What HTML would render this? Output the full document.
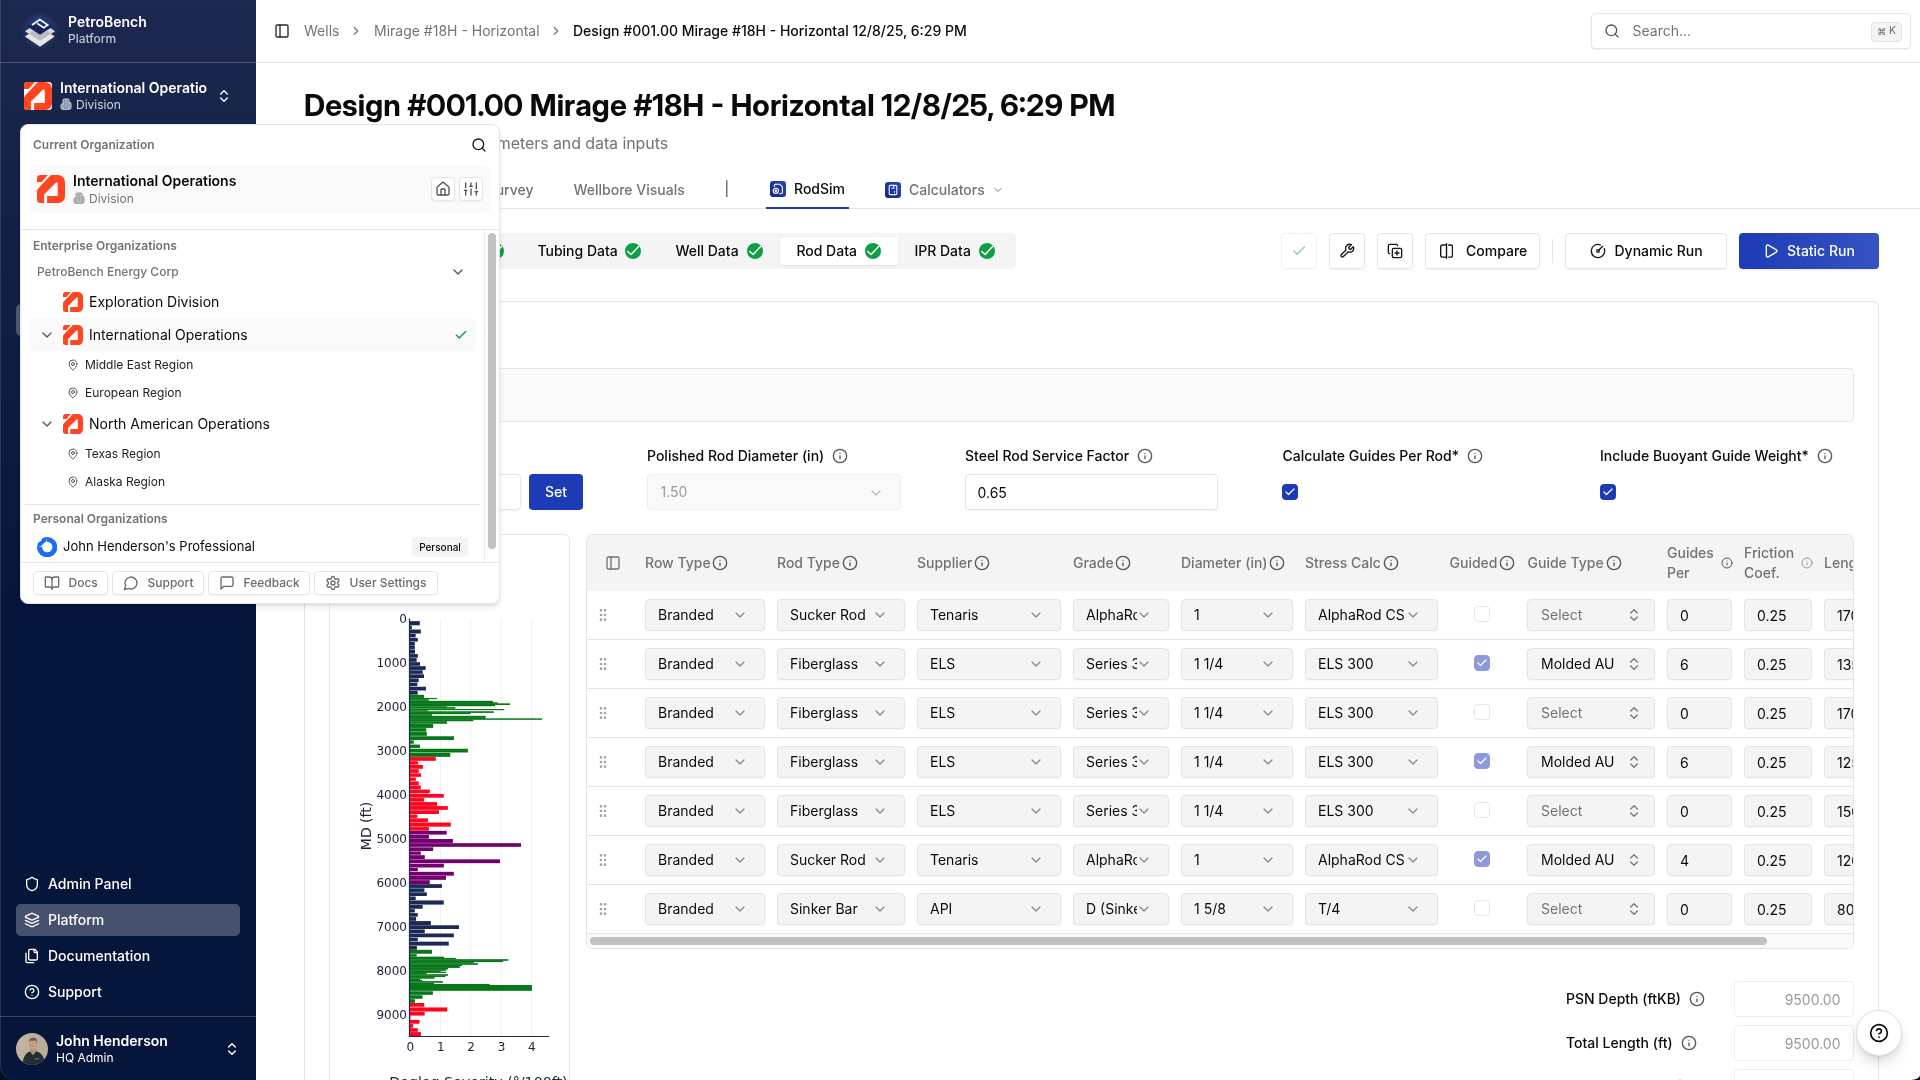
<!DOCTYPE html>
<html lang="en">
<head>
<meta charset="utf-8">
<title>PetroBench Platform - RodSim Design</title>
<style>
*{box-sizing:border-box;margin:0;padding:0}
html,body{width:1920px;height:1080px;overflow:hidden;background:#0a0f1f}
body{font-size-adjust:0.5459;font-feature-settings:'liga' 1,'calt' 1;font-family:"Inter","Liberation Sans",sans-serif;font-size:14px;line-height:20px;color:#0a0a0a;-webkit-font-smoothing:antialiased}
svg{display:block}
.ic{fill:none;stroke:currentColor;stroke-width:2;stroke-linecap:round;stroke-linejoin:round}
.abs{position:absolute}
.nw{white-space:nowrap}
#app{position:absolute;left:0;top:0;width:1920px;height:1080px;overflow:hidden;background:#0a0f1f;will-change:transform}
#sidebar{position:absolute;left:0;top:0;width:256px;height:1080px;background:linear-gradient(180deg,#1c284e 0%,#06153a 58%,#06153a 100%);box-shadow:inset 1px 0 0 rgba(255,255,255,.13);border-bottom-left-radius:14px 15px;color:#fff;overflow:hidden}
#main{position:absolute;left:256px;top:0;width:1664px;height:1080px;background:#fff;border-bottom-right-radius:9px 5px;overflow:hidden}
.m{font-weight:500}.sb,.lbl12.sb{font-weight:600}.b{font-weight:700}
.mut{color:#737373}
/* sidebar */
.sbline{position:absolute;left:0;width:256px;height:1px;background:rgba(255,255,255,.22)}
.nav{position:absolute;left:16px;width:224px;height:32px;border-radius:5px}
.nav svg{position:absolute;left:8px;top:8px;width:16px;height:16px}
.nav span{position:absolute;left:32px;top:6px;font-weight:500;font-size:14px;line-height:20px;white-space:nowrap}
.nav.act{background:rgba(255,255,255,.26)}
/* popover */
#pop{position:absolute;left:20px;top:124px;width:480px;height:480px;background:#fff;border:1px solid #e5e5e5;border-radius:8px;box-shadow:0 4px 6px -1px rgba(0,0,0,.10),0 2px 4px -2px rgba(0,0,0,.10);color:#0a0a0a;overflow:hidden}
.lbl12{position:absolute;font-size:12px;line-height:16px;font-weight:500;color:#737373;white-space:nowrap}
.orgrow{position:absolute;left:8px;width:447px;height:32px;border-radius:1px}
.orgrow .lg{position:absolute;left:34px;top:6px;width:20px;height:20px}
.orgrow .nm{position:absolute;left:60px;top:6px;font-size:14px;line-height:20px;white-space:nowrap;color:#0a0a0a}
.orgrow .chev{position:absolute;left:10px;top:8px;width:16px;height:16px;color:#555}
.reg{position:absolute;left:46px;height:28px;width:380px}
.reg svg{position:absolute;left:0;top:8px;width:12px;height:12px;color:#555}
.reg span{position:absolute;left:18px;top:6px;font-size:12px;line-height:16px;font-weight:400;white-space:nowrap;color:#222}
.fbtn{position:absolute;top:446px;height:24px;border:1px solid #e5e5e5;border-radius:4px;background:#fff;color:#6b6b6b;font-size:12px;line-height:16px;font-weight:500;box-shadow:0 1px 2px rgba(0,0,0,.04)}
.fbtn svg{position:absolute;left:10px;top:3px;width:16px;height:16px}
.fbtn span{position:absolute;left:34.500px;top:2.500px;white-space:nowrap}
/* main */
.hline{position:absolute;left:0;height:1px;background:#e5e5e5}
.btn{position:absolute;top:233px;height:36px;border:1px solid #e5e5e5;border-radius:4px;background:#fff;box-shadow:0 1px 2px rgba(0,0,0,.05)}
.btn svg{position:absolute;width:16px;height:16px;top:9px}
.btn span{position:absolute;top:7px;font-weight:500;white-space:nowrap}
.pill{position:absolute;top:4px;height:28px;border-radius:4px;font-weight:500;white-space:nowrap}
.pill span{position:absolute;left:16.400px;top:4px}
.pill i{position:absolute;right:17px;top:6px;width:16px;height:16px;border-radius:50%;background:#0e9f44;box-shadow:0 0 0 .600px rgba(255,255,255,.8)}
.pill i svg{position:absolute;left:0;top:0;width:16px;height:16px;overflow:visible}
.flabel{position:absolute;top:446px;font-weight:500;white-space:nowrap;line-height:20px}
.info{position:absolute;width:16px;height:16px;color:#555}
.cb{position:absolute;width:16px;height:16px;border-radius:4px;background:#1d3bb6}
.cb svg{position:absolute;left:2px;top:2px;width:12px;height:12px;color:#fff;stroke-width:2.4}
/* table */
#tbl{position:absolute;left:330px;top:534px;width:1268px;height:415px;border:1px solid #e5e5e5;border-radius:6px;overflow:hidden;background:#fff}
.th{position:absolute;top:0;height:56px;color:#737373;font-weight:500;white-space:nowrap}
.th span{position:absolute;left:0;top:18px}
.th .info{top:20px;color:#555}
.row{position:absolute;left:0;width:1400px;height:49px;border-bottom:1px solid #e5e5e5}
.sel,.inp{position:absolute;top:8px;height:32px;border:1px solid #e4e4e7;border-radius:4px;background:#f4f4f5;box-shadow:0 1px 2px rgba(0,0,0,.04);overflow:hidden}
.sel span{position:absolute;left:12px;top:5px;white-space:nowrap;overflow:hidden}
.sel svg{position:absolute;top:7px;right:16px;width:16px;height:16px;color:#8a8a8a}
.sel.ud svg{right:12px;color:#777}.sel.ud span{left:13px}
.inp span{position:absolute;left:12px;top:6px;white-space:nowrap}
.grip{position:absolute;left:8px;top:16px;width:16px;height:16px;color:#a3a3a3}
.tcb{position:absolute;left:887px;top:15px;width:16px;height:16px;border-radius:4px;border:1px solid #e3e5ef;background:#fff}
.tcb.on{background:#8d99dc;border-color:#8d99dc}
.tcb.on svg{position:absolute;left:1px;top:1px;width:12px;height:12px;color:#fff;stroke-width:2.4}
</style>
</head>
<body>
<div id="app">
<svg width="0" height="0" style="position:absolute;left:-10px;top:-10px" aria-hidden="true">
  <defs>
    <linearGradient id="bluegrad" x1="1" y1="0" x2="0" y2="1"><stop offset="0" stop-color="#2747c8"/><stop offset="1" stop-color="#142678"/></linearGradient>
    <g id="orglogo">
      <rect width="28" height="28" rx="3.500" fill="#fff"/>
      <path d="M3.500 0H10.750L4.800 6.900H0V3.500A3.500 3.500 0 0 1 3.500 0z" fill="#ff4521"/>
      <path d="M13.900 0H21A7 7 0 0 1 28 7V21.500A6.500 6.500 0 0 1 21.500 28H10.100V21H20.750V8.700A1.500 1.500 0 0 0 19.250 7.200L7 19.500V28H3.500A3.500 3.500 0 0 1 0 24.500V16.200A4 4 0 0 1 1.150 13.400z" fill="#ff4521"/>
    </g>
    <g id="orglogo-t">
      <path d="M3.500 0H10.750L4.800 6.900H0V3.500A3.500 3.500 0 0 1 3.500 0z" fill="#ff4521"/>
      <path d="M13.900 0H21A7 7 0 0 1 28 7V21.500A6.500 6.500 0 0 1 21.500 28H10.100V21H20.750V8.700A1.500 1.500 0 0 0 19.250 7.200L7 19.500V28H3.500A3.500 3.500 0 0 1 0 24.500V16.200A4 4 0 0 1 1.150 13.400z" fill="#ff4521"/>
    </g>
    <g id="i-building"><path d="M6 22V4a2 2 0 0 1 2-2h8a2 2 0 0 1 2 2v18Z"/><path d="M6 12H4a2 2 0 0 0-2 2v6a2 2 0 0 0 2 2h2"/><path d="M18 9h2a2 2 0 0 1 2 2v9a2 2 0 0 1-2 2h-2"/><path d="M10 6h4"/><path d="M10 10h4"/><path d="M10 14h4"/><path d="M10 18h4"/></g>
    <g id="i-house"><path d="M15 21v-8a1 1 0 0 0-1-1h-4a1 1 0 0 0-1 1v8"/><path d="M3 10a2 2 0 0 1 .709-1.528l7-5.999a2 2 0 0 1 2.582 0l7 5.999A2 2 0 0 1 21 10v9a2 2 0 0 1-2 2H5a2 2 0 0 1-2-2z"/></g>
    <g id="i-files"><path d="M20 7h-3a2 2 0 0 1-2-2V2"/><path d="M9 18a2 2 0 0 1-2-2V4a2 2 0 0 1 2-2h7l4 4v10a2 2 0 0 1-2 2Z"/><path d="M3 7.600v12.800A1.600 1.600 0 0 0 4.600 22h9.800"/></g>
    <g id="i-pin"><path d="M20 10c0 4.993-5.539 10.193-7.399 11.799a1 1 0 0 1-1.202 0C9.539 20.193 4 14.993 4 10a8 8 0 0 1 16 0"/><circle cx="12" cy="10" r="3"/></g>
    <g id="i-layers"><path d="m12.830 2.180a2 2 0 0 0-1.660 0L2.600 6.080a1 1 0 0 0 0 1.830l8.580 3.910a2 2 0 0 0 1.660 0l8.580-3.900a1 1 0 0 0 0-1.830Z"/><path d="m22 17.650-9.170 4.160a2 2 0 0 1-1.660 0L2 17.650"/><path d="m22 12.650-9.170 4.160a2 2 0 0 1-1.660 0L2 12.650"/></g>
    <g id="i-gauge"><path d="M15.600 2.700a10 10 0 1 0 5.700 5.700"/><circle cx="12" cy="12" r="2"/><path d="M13.400 10.600 19 5"/></g>
    <g id="i-wrench"><path d="M14.700 6.300a1 1 0 0 0 0 1.400l1.600 1.600a1 1 0 0 0 1.400 0l3.770-3.770a6 6 0 0 1-7.940 7.940l-6.910 6.910a2.120 2.120 0 0 1-3-3l6.910-6.910a6 6 0 0 1 7.940-7.940l-3.760 3.760z"/></g>
    <g id="i-book"><path d="M12 7v14"/><path d="M3 18a1 1 0 0 1-1-1V4a1 1 0 0 1 1-1h5a4 4 0 0 1 4 4 4 4 0 0 1 4-4h5a1 1 0 0 1 1 1v13a1 1 0 0 1-1 1h-6a3 3 0 0 0-3 3 3 3 0 0 0-3-3z"/></g>
    <g id="i-help"><circle cx="12" cy="12" r="10"/><path d="M9.090 9a3 3 0 0 1 5.830 1c0 2-3 3-3 3"/><path d="M12 17h.01"/></g>
    <g id="i-info"><circle cx="12" cy="12" r="10"/><path d="M12 16v-4"/><path d="M12 8h.01"/></g>
    <g id="i-cd"><path d="m6 9 6 6 6-6"/></g>
    <g id="i-cr"><path d="m9 18 6-6-6-6"/></g>
    <g id="i-ud"><path d="m7 15 5 5 5-5"/><path d="m7 9 5-5 5 5"/></g>
    <g id="i-check"><path d="M20 6 9 17l-5-5"/></g>
    <g id="i-search"><circle cx="11" cy="11" r="8"/><path d="m21 21-4.300-4.300"/></g>
    <g id="i-panel"><rect width="18" height="18" x="3" y="3" rx="2"/><path d="M9 3v18"/></g>
    <g id="i-grip"><circle cx="9" cy="12" r="1"/><circle cx="9" cy="5" r="1"/><circle cx="9" cy="19" r="1"/><circle cx="15" cy="12" r="1"/><circle cx="15" cy="5" r="1"/><circle cx="15" cy="19" r="1"/></g>
    <g id="i-sliders"><path d="M4 21v-7"/><path d="M4 10V3"/><path d="M12 21v-9"/><path d="M12 8V3"/><path d="M20 21v-5"/><path d="M20 12V3"/><path d="M2 14h4"/><path d="M10 8h4"/><path d="M18 16h4"/></g>
    <g id="i-msgc"><path d="M7.900 20A9 9 0 1 0 4 16.100L2 22Z"/></g>
    <g id="i-msgs"><path d="M21 15a2 2 0 0 1-2 2H7l-4 4V5a2 2 0 0 1 2-2h14a2 2 0 0 1 2 2z"/></g>
    <g id="i-gear"><path d="M12.220 2h-.440a2 2 0 0 0-2 2v.180a2 2 0 0 1-1 1.730l-.430.250a2 2 0 0 1-2 0l-.150-.080a2 2 0 0 0-2.730.730l-.220.380a2 2 0 0 0 .730 2.730l.150.100a2 2 0 0 1 1 1.720v.510a2 2 0 0 1-1 1.740l-.150.090a2 2 0 0 0-.730 2.730l.220.380a2 2 0 0 0 2.730.730l.150-.080a2 2 0 0 1 2 0l.430.250a2 2 0 0 1 1 1.730V20a2 2 0 0 0 2 2h.440a2 2 0 0 0 2-2v-.180a2 2 0 0 1 1-1.730l.430-.250a2 2 0 0 1 2 0l.150.080a2 2 0 0 0 2.730-.730l.220-.390a2 2 0 0 0-.730-2.730l-.150-.080a2 2 0 0 1-1-1.740v-.500a2 2 0 0 1 1-1.740l.150-.090a2 2 0 0 0 .730-2.730l-.220-.380a2 2 0 0 0-2.730-.730l-.150.080a2 2 0 0 1-2 0l-.430-.250a2 2 0 0 1-1-1.730V4a2 2 0 0 0-2-2z"/><circle cx="12" cy="12" r="3"/></g>
    <g id="i-copyplus"><path d="M15 12v6"/><path d="M12 15h6"/><rect width="14" height="14" x="8" y="8" rx="2" ry="2"/><path d="M4 16c-1.100 0-2-.900-2-2V4c0-1.100.900-2 2-2h10c1.100 0 2 .900 2 2"/></g>
    <g id="i-split"><path d="M8 19H5c-1.100 0-2-.900-2-2V7c0-1.100.900-2 2-2h3"/><path d="M16 5h3c1.100 0 2 .900 2 2v10c0 1.100-.900 2-2 2h-3"/><path d="M12 4v16"/></g>
    <g id="i-play"><path d="M5 5a2 2 0 0 1 3.008-1.728l11.997 6.998a2 2 0 0 1 .003 3.458l-12 7A2 2 0 0 1 5 19z"/></g>
  </defs>
</svg>
<div id="sidebar">
  <svg class="abs" style="left:24px;top:15px;width:32px;height:32px;overflow:visible" viewBox="0 0 32 32">
    <defs><radialGradient id="glow" cx="50%" cy="50%" r="50%"><stop offset="0%" stop-color="#9aa8cc" stop-opacity=".50"/><stop offset="60%" stop-color="#8fa0c8" stop-opacity=".16"/><stop offset="100%" stop-color="#8fa0c8" stop-opacity="0"/></radialGradient>
    <linearGradient id="ltop" x1="0" y1="0" x2="0" y2="1"><stop offset="0" stop-color="#1d3f86"/><stop offset=".45" stop-color="#1b3474"/><stop offset=".62" stop-color="#19235b"/><stop offset="1" stop-color="#171f55"/></linearGradient></defs>
    <circle cx="16" cy="16" r="19" fill="url(#glow)"/>
    <path d="M0.900 21.500 16 11.500 30.600 21.500 16 31.800z" fill="#e6e7e8"/>
    <path d="M1.200 16.200 16 6.500 30.800 16.200 16 25.700z" fill="#bcbdc1"/>
    <path d="M1.200 16.200 5.600 13.300 9.200 15.700 4.600 18.500z" fill="#dadbdd"/><path d="M30.800 16.200 26.500 13.300 22.900 15.700 27.500 18.500z" fill="#dadbdd"/>
    <path d="M1.250 10 15.650 0 31 10 16 19.700z" fill="url(#ltop)"/>
    <path d="M8 10 15.850 4.550 23.800 10 19.700 12.700 13.300 8.400" fill="none" stroke="#fff" stroke-width="1.550" stroke-linejoin="miter"/>
  </svg>
  <div class="abs sb nw" style="left:68px;top:12px;font-size:14px;line-height:20px">PetroBench</div>
  <div class="abs m nw" style="left:68px;top:31px;font-size:12px;line-height:16px;color:#bfc5d8">Platform</div>
  <div class="sbline" style="top:62px"></div>

  <svg class="abs" style="left:24px;top:82px;width:28px;height:28px" viewBox="0 0 28 28"><use href="#orglogo"/></svg>
  <div class="abs sb nw" style="left:60px;top:78px;width:147px;overflow:hidden;font-size:14px;line-height:20px">International Operations</div>
  <svg class="abs ic" style="left:60px;top:98px;width:12px;height:12px;color:#cfd4e2;fill:rgba(160,170,198,.7)" viewBox="0 0 24 24"><use href="#i-building"/></svg>
  <div class="abs nw" style="left:76px;top:97px;font-size:12px;line-height:16px;color:#d3d8e6">Division</div>
  <svg class="abs ic" style="left:216px;top:88px;width:16px;height:16px" viewBox="0 0 24 24"><path d="m7 15 5 5 5-5"/><path d="m7 9 5-5 5 5"/></svg>

  <!-- nav items (mostly hidden behind the organization switcher) -->
  <div class="abs m nw" style="left:24px;top:140px;font-size:12px;line-height:16px;color:#aab2cc">Workspace</div>
  <div class="nav" style="top:165px"><svg class="ic" viewBox="0 0 24 24"><use href="#i-house"/></svg><span>Dashboard</span></div>
  <div class="nav" style="top:200px"><svg class="ic" viewBox="0 0 24 24"><use href="#i-files"/></svg><span>Projects</span></div>
  <div class="nav" style="top:235px"><svg class="ic" viewBox="0 0 24 24"><use href="#i-pin"/></svg><span>Fields</span></div>
  <div class="nav" style="top:270px"><svg class="ic" viewBox="0 0 24 24"><use href="#i-layers"/></svg><span>Pads</span></div>
  <div class="nav act" style="top:304px"><svg class="ic" viewBox="0 0 24 24"><use href="#i-gauge"/></svg><span>Wells</span></div>
  <div class="nav" style="top:340px"><svg class="ic" viewBox="0 0 24 24"><use href="#i-wrench"/></svg><span>Designs</span></div>
  <div class="nav" style="top:375px"><svg class="ic" viewBox="0 0 24 24"><use href="#i-book"/></svg><span>Reports</span></div>

  <div class="nav" style="top:868px"><svg class="ic" viewBox="0 0 24 24"><path d="M20 13c0 5-3.500 7.500-7.660 8.950a1 1 0 0 1-.670-.010C7.500 20.500 4 18 4 13V6a1 1 0 0 1 1-1c2 0 4.500-1.200 6.240-2.720a1.170 1.170 0 0 1 1.520 0C14.510 3.810 17 5 19 5a1 1 0 0 1 1 1z"/></svg><span>Admin Panel</span></div>
  <div class="nav act" style="top:904px"><svg class="ic" viewBox="0 0 24 24"><use href="#i-layers"/></svg><span>Platform</span></div>
  <div class="nav" style="top:940px"><svg class="ic" viewBox="0 0 24 24"><use href="#i-files"/></svg><span>Documentation</span></div>
  <div class="nav" style="top:976px"><svg class="ic" viewBox="0 0 24 24"><use href="#i-help"/></svg><span>Support</span></div>
  <div class="sbline" style="top:1016px"></div>

  <!-- avatar -->
  <svg class="abs" style="left:16px;top:1033px;width:32px;height:32px" viewBox="0 0 32 32">
    <defs><clipPath id="avc"><circle cx="16" cy="16" r="16"/></clipPath></defs>
    <g clip-path="url(#avc)">
      <rect width="32" height="32" fill="#b9ad97"/>
      <ellipse cx="9" cy="14" rx="9" ry="12" fill="#c2b7a2" opacity=".6"/>
      <path d="M6.500 32c.300-8 3.700-12.500 7.500-13.500l3 2.200 3.200-2.400c5 1.300 8.300 5.700 9.300 13.700z" fill="#252d33"/>
      <path d="M14 18.200l3 3 3.200-3.200-.3-2.500h-5.600z" fill="#b98a72"/>
      <path d="M15.300 19.600l1.700 1.600 1.800-1.700" fill="none" stroke="#8f9aa3" stroke-width="1.200"/>
      <ellipse cx="17" cy="11.700" rx="4.100" ry="5.200" fill="#c99b84"/>
      <path d="M12.800 10.600c-.3-4.200 2-5.800 4.400-5.800 2.600 0 4.600 1.700 4.100 5.600-.6-1.800-1.300-2.900-2.300-3.200-1.600.7-4 .6-5.100.2-.6.700-.9 1.800-1.100 3.200z" fill="#6b5a4c"/>
      <rect x="18.600" y="25.400" width="4.600" height=".9" fill="#7d868c"/>
    </g>
  </svg>
  <div class="abs sb nw" style="left:56px;top:1031px;font-size:14px;line-height:20px">John Henderson</div>
  <div class="abs nw" style="left:56px;top:1050px;font-size:12px;line-height:16px">HQ Admin</div>
  <svg class="abs ic" style="left:224px;top:1041px;width:16px;height:16px" viewBox="0 0 24 24"><path d="m7 15 5 5 5-5"/><path d="m7 9 5-5 5 5"/></svg>
</div>
<div id="main">
<svg class="abs ic" style="left:18px;top:23px;width:16px;height:16px;color:#262626" viewBox="0 0 24 24"><use href="#i-panel"/></svg>
<div class="abs nw mut" style="left:48px;top:21px">Wells</div>
<svg class="abs ic" style="left:92.5px;top:24px;width:14px;height:14px;color:#737373" viewBox="0 0 24 24"><use href="#i-cr"/></svg>
<div class="abs nw mut" style="left:118px;top:21px">Mirage #18H - Horizontal</div>
<svg class="abs ic" style="left:293px;top:24px;width:14px;height:14px;color:#737373" viewBox="0 0 24 24"><use href="#i-cr"/></svg>
<div class="abs nw m" style="left:317px;top:21px">Design #001.00 Mirage #18H - Horizontal 12/8/25, 6:29 PM</div>
<div class="abs" style="left:1335px;top:13px;width:320px;height:36px;border:1px solid #e5e5e5;border-radius:4px;box-shadow:0 1px 2px rgba(0,0,0,.05);background:#fff">
<svg class="abs ic" style="left:12px;top:9px;width:16px;height:16px;color:#555" viewBox="0 0 24 24"><use href="#i-search"/></svg>
<div class="abs nw mut" style="left:40.500px;top:7px">Search...</div>
<div class="abs nw" style="left:279px;top:8px;width:31px;height:20px;border:1px solid #e5e5e5;border-radius:4px;background:#f4f4f5;color:#6b6b6b"><span class="abs" style="left:5.200px;top:.700px;font-size:9px;line-height:16px">⌘</span><span class="abs" style="left:17px;top:-0.500px;font-size:10.500px;line-height:16px">K</span></div>
</div>
<div class="hline" style="top:62px;width:1664px"></div>
<div class="abs nw b" style="left:48px;top:87px;font-family:'Inter Display','Inter','Liberation Sans',sans-serif;font-size-adjust:none;font-size:30px;line-height:36px;letter-spacing:calc(17.243px - 0.0846ch - 1.0013ex)">Design #001.00 Mirage #18H - Horizontal 12/8/25, 6:29 PM</div>
<div class="abs nw mut" style="right:1252px;top:131px;font-size:16px;line-height:24px;letter-spacing:-0.090px">Configure rod design parameters and data inputs</div>
<div class="abs nw m mut" style="right:1386.5px;top:180px">Deviation Survey</div>
<div class="abs nw m mut" style="left:317.5px;top:180px">Wellbore Visuals</div>
<div class="abs nw" style="left:468.6px;top:179px;color:#404040;font-size:14px;line-height:20px">|</div>
<svg class="abs" style="left:514px;top:181px;width:16px;height:16px" viewBox="0 0 16 16"><rect width="16" height="16" rx="3" fill="url(#bluegrad)"/><g fill="none" stroke="#fff" stroke-width="1.100" stroke-linecap="round" stroke-linejoin="round"><path d="M5.500 3.200h4.300l2.600 2.600v5.400a1.500 1.500 0 0 1-1.500 1.500h-1.200"/><circle cx="5.800" cy="9.800" r="2.600"/><circle cx="5.800" cy="9.800" r=".700"/><path d="M4.300 5.600V4.400a1.200 1.200 0 0 1 1.200-1.200"/></g></svg>
<div class="abs nw m" style="left:538px;top:179px">RodSim</div>
<div class="abs" style="left:510px;top:207px;width:83px;height:2px;background:#1e3bb3;z-index:2"></div>
<svg class="abs" style="left:629px;top:182px;width:16px;height:16px" viewBox="0 0 16 16"><rect width="16" height="16" rx="3" fill="url(#bluegrad)"/><g fill="none" stroke="#fff" stroke-width="1.100" stroke-linecap="round" stroke-linejoin="round"><rect x="4.200" y="3.400" width="7.600" height="9.200" rx="1.200"/><path d="M8.800 3.600v2.600h-1.800"/><path d="M9.500 9.500h.010M9.500 10.800h.010"/></g></svg>
<div class="abs nw m mut" style="left:653px;top:180px">Calculators</div>
<svg class="abs ic" style="left:736.2px;top:184px;width:12px;height:12px;color:#737373" viewBox="0 0 24 24"><use href="#i-cd"/></svg>
<div class="hline" style="top:208px;width:1664px"></div>
<div class="abs" style="left:48px;top:233px;width:712px;height:36px;border-radius:6px;background:#f4f4f5">
<div class="pill" style="left:4px;width:116px;"><span>Surface Data</span><i><svg viewBox="0 0 16 16"><path d="M2.700 8.500 6.050 11.550 13.800 3.200" fill="none" stroke="#fff" stroke-width="1.500" stroke-linecap="round" stroke-linejoin="round"/></svg></i></div>
<div class="pill" style="left:100px;width:117px;"><span>Pump Data</span><i><svg viewBox="0 0 16 16"><path d="M2.700 8.500 6.050 11.550 13.800 3.200" fill="none" stroke="#fff" stroke-width="1.500" stroke-linecap="round" stroke-linejoin="round"/></svg></i></div>
<div class="pill" style="left:217px;width:137px;"><span>Tubing Data</span><i><svg viewBox="0 0 16 16"><path d="M2.700 8.500 6.050 11.550 13.800 3.200" fill="none" stroke="#fff" stroke-width="1.500" stroke-linecap="round" stroke-linejoin="round"/></svg></i></div>
<div class="pill" style="left:355px;width:121px;"><span>Well Data</span><i><svg viewBox="0 0 16 16"><path d="M2.700 8.500 6.050 11.550 13.800 3.200" fill="none" stroke="#fff" stroke-width="1.500" stroke-linecap="round" stroke-linejoin="round"/></svg></i></div>
<div class="pill" style="left:476px;width:118px;background:#fff;box-shadow:0 1px 2px rgba(0,0,0,.08);"><span>Rod Data</span><i><svg viewBox="0 0 16 16"><path d="M2.700 8.500 6.050 11.550 13.800 3.200" fill="none" stroke="#fff" stroke-width="1.500" stroke-linecap="round" stroke-linejoin="round"/></svg></i></div>
<div class="pill" style="left:594px;width:114px;"><span>IPR Data</span><i><svg viewBox="0 0 16 16"><path d="M2.700 8.500 6.050 11.550 13.800 3.200" fill="none" stroke="#fff" stroke-width="1.500" stroke-linecap="round" stroke-linejoin="round"/></svg></i></div>
</div>
<div class="btn" style="left:1025px;width:36px;opacity:.5"><svg class="abs ic" style="left:9px;color:#0ea371" viewBox="0 0 24 24"><use href="#i-check"/></svg></div>
<div class="btn" style="left:1073px;width:36px"><svg class="abs ic" style="left:9px;color:#171717" viewBox="0 0 24 24"><use href="#i-wrench"/></svg></div>
<div class="btn" style="left:1121px;width:36px"><svg class="abs ic" style="left:9px;color:#171717" viewBox="0 0 24 24"><use href="#i-copyplus"/></svg></div>
<div class="btn" style="left:1169px;width:115px"><svg class="abs" style="left:13.800px;top:9px;width:13.200px;height:16px;fill:none;stroke:#171717;stroke-width:1.400;stroke-linecap:round;stroke-linejoin:round" viewBox="0 0 13.200 16"><path d="M6.500 .700V15.300"/><path d="M6.500 2H2.200A1.500 1.500 0 0 0 .700 3.500V12.600A1.500 1.500 0 0 0 2.200 14.100H6.500"/><path d="M8.700 2H11A1.500 1.500 0 0 1 12.500 3.500V12.600A1.500 1.500 0 0 1 11 14.100H8.700"/></svg><span style="left:40px">Compare</span></div>
<div class="abs" style="left:1296px;top:239px;width:1px;height:24px;background:#e5e5e5"></div>
<div class="btn" style="left:1309px;width:162px"><svg class="abs ic" style="left:23.500px;color:#171717" viewBox="0 0 24 24"><use href="#i-gauge"/></svg><span style="left:48.500px">Dynamic Run</span></div>
<div class="btn" style="left:1483px;width:140px;border:0;background:linear-gradient(90deg,#1d3bb6,#3653c2);color:#fff;box-shadow:0 1px 2px rgba(0,0,0,.1)"><svg class="abs ic" style="left:24px;top:10px" viewBox="0 0 24 24"><use href="#i-play"/></svg><span style="left:48px;top:8px">Static Run</span></div>
<div class="abs" style="left:48px;top:301px;width:1575px;height:900px;border:1px solid #e5e5e5;border-radius:6px;background:#fff"></div>
<div class="abs m" style="left:73px;top:326px;font-size:18px;line-height:28px">Rod String Design</div>
<div class="abs" style="left:73px;top:368px;width:1525px;height:54px;border:1px solid #e5e5e5;border-radius:4px;background:#fafafa"></div>
<div class="abs nw mut" style="left:89px;top:385px">Taper percentages</div>
<div class="flabel" style="left:73px">Top of Rod String (ft)</div>
<div class="abs" style="left:73px;top:474px;width:192px;height:36px;border:1px solid #e5e5e5;border-radius:4px;box-shadow:0 1px 2px rgba(0,0,0,.05)"><div class="abs" style="left:12px;top:7px">0.00</div></div>
<div class="abs m" style="left:273px;top:474px;width:54px;height:36px;border-radius:4px;background:#1d3bb6;color:#fff;text-align:center;line-height:36px">Set</div>
<div class="flabel" style="left:391px">Polished Rod Diameter (in)</div>
<svg class="abs ic" style="left:576px;top:448px;width:16px;height:16px;color:#555" viewBox="0 0 24 24"><use href="#i-info"/></svg>
<div class="abs" style="left:391px;top:474px;width:254px;height:36px;border:1px solid #ededed;border-radius:4px;background:#f9f9f9"><div class="abs" style="left:12.500px;top:7px;color:#9a9a9a">1.50</div><svg class="abs ic" style="right:16px;top:10px;width:16px;height:16px;color:#bdbdbd" viewBox="0 0 24 24"><use href="#i-cd"/></svg></div>
<div class="flabel" style="left:709px">Steel Rod Service Factor</div>
<svg class="abs ic" style="left:881px;top:448px;width:16px;height:16px;color:#555" viewBox="0 0 24 24"><use href="#i-info"/></svg>
<div class="abs" style="left:709px;top:474px;width:253px;height:36px;border:1px solid #e5e5e5;border-radius:4px;box-shadow:0 1px 2px rgba(0,0,0,.05)"><div class="abs" style="left:11.500px;top:8px">0.65</div></div>
<div class="flabel" style="left:1026.5px">Calculate Guides Per Rod*</div>
<svg class="abs ic" style="left:1211px;top:448px;width:16px;height:16px;color:#555" viewBox="0 0 24 24"><use href="#i-info"/></svg>
<div class="cb" style="left:1026px;top:484px"><svg class="ic" viewBox="0 0 24 24"><use href="#i-check"/></svg></div>
<div class="flabel" style="left:1344px">Include Buoyant Guide Weight*</div>
<svg class="abs ic" style="left:1561px;top:448px;width:16px;height:16px;color:#555" viewBox="0 0 24 24"><use href="#i-info"/></svg>
<div class="cb" style="left:1344px;top:484px"><svg class="ic" viewBox="0 0 24 24"><use href="#i-check"/></svg></div>
<div class="abs" style="left:73px;top:534px;width:241px;height:700px;border:1px solid #e5e5e5;border-radius:6px;background:#fff"></div>
<svg class="abs" style="left:74px;top:535px;width:239px;height:545px;font-size-adjust:none;font-family:'DejaVu Sans','Liberation Sans',sans-serif" viewBox="330 535 239 545">
<line x1="440.5" y1="619" x2="440.5" y2="1036" stroke="#eeeff2" stroke-width="1"/>
<line x1="470.9" y1="619" x2="470.9" y2="1036" stroke="#eeeff2" stroke-width="1"/>
<line x1="501.3" y1="619" x2="501.3" y2="1036" stroke="#eeeff2" stroke-width="1"/>
<line x1="531.7" y1="619" x2="531.7" y2="1036" stroke="#eeeff2" stroke-width="1"/>
<rect x="410" y="621.17" width="9.83" height="4.17" fill="#1c2952"/>
<rect x="410" y="625.75" width="1.83" height="3.33" fill="#1c2952"/>
<rect x="410" y="629.50" width="10.83" height="4.00" fill="#1c2952"/>
<rect x="410" y="633.83" width="5.67" height="3.58" fill="#1c2952"/>
<rect x="410" y="638.00" width="7.83" height="3.58" fill="#1c2952"/>
<rect x="410" y="642.00" width="4.83" height="3.75" fill="#1c2952"/>
<rect x="410" y="646.00" width="4.83" height="3.50" fill="#1c2952"/>
<rect x="410" y="649.92" width="5.00" height="3.75" fill="#1c2952"/>
<rect x="410" y="654.08" width="7.83" height="3.58" fill="#1c2952"/>
<rect x="410" y="658.08" width="6.67" height="3.75" fill="#1c2952"/>
<rect x="410" y="662.17" width="10.00" height="3.58" fill="#1c2952"/>
<rect x="410" y="666.17" width="15.67" height="3.75" fill="#1c2952"/>
<rect x="410" y="670.33" width="12.67" height="3.50" fill="#1c2952"/>
<rect x="410" y="674.33" width="14.00" height="3.67" fill="#1c2952"/>
<rect x="410" y="678.42" width="8.67" height="3.75" fill="#1c2952"/>
<rect x="410" y="682.67" width="7.33" height="3.50" fill="#1c2952"/>
<rect x="410" y="686.75" width="16.00" height="3.75" fill="#1c2952"/>
<rect x="410" y="690.83" width="7.67" height="3.83" fill="#1c2952"/>
<rect x="410" y="694.83" width="14.00" height="3.08" fill="#07771a"/>
<rect x="410" y="697.92" width="27.08" height="1.25" fill="#07771a"/>
<rect x="410" y="699.17" width="18.75" height="1.67" fill="#07771a"/>
<rect x="410" y="700.83" width="82.92" height="2.50" fill="#07771a"/>
<rect x="410" y="702.33" width="87.92" height="1.42" fill="#07771a"/>
<rect x="410" y="703.33" width="100.00" height="1.67" fill="#07771a"/>
<rect x="410" y="704.58" width="85.00" height="1.67" fill="#07771a"/>
<rect x="410" y="706.25" width="36.67" height="1.67" fill="#07771a"/>
<rect x="410" y="707.08" width="45.42" height="1.67" fill="#07771a"/>
<rect x="410" y="709.00" width="94.17" height="1.17" fill="#07771a"/>
<rect x="410" y="710.17" width="17.92" height="1.17" fill="#07771a"/>
<rect x="410" y="711.25" width="83.75" height="1.67" fill="#07771a"/>
<rect x="410" y="712.50" width="60.42" height="1.67" fill="#07771a"/>
<rect x="410" y="714.17" width="22.08" height="1.67" fill="#07771a"/>
<rect x="410" y="715.83" width="75.83" height="2.08" fill="#07771a"/>
<rect x="410" y="717.92" width="75.00" height="1.08" fill="#07771a"/>
<rect x="410" y="718.33" width="132.08" height="1.50" fill="#07771a"/>
<rect x="410" y="719.58" width="63.33" height="1.67" fill="#07771a"/>
<rect x="410" y="721.25" width="37.08" height="2.50" fill="#07771a"/>
<rect x="410" y="724.00" width="23.17" height="3.92" fill="#07771a"/>
<rect x="410" y="728.17" width="16.25" height="3.50" fill="#07771a"/>
<rect x="410" y="732.08" width="16.83" height="3.75" fill="#07771a"/>
<rect x="410" y="736.25" width="44.00" height="3.75" fill="#07771a"/>
<rect x="410" y="740.42" width="3.75" height="3.33" fill="#07771a"/>
<rect x="410" y="744.58" width="10.00" height="3.33" fill="#07771a"/>
<rect x="410" y="748.75" width="57.92" height="3.75" fill="#07771a"/>
<rect x="410" y="752.92" width="40.25" height="3.92" fill="#07771a"/>
<rect x="410" y="757.08" width="25.83" height="3.75" fill="#ff0520"/>
<rect x="410" y="761.25" width="8.17" height="3.33" fill="#ff0520"/>
<rect x="410" y="765.00" width="12.92" height="3.75" fill="#ff0520"/>
<rect x="410" y="769.17" width="8.75" height="3.75" fill="#ff0520"/>
<rect x="410" y="773.33" width="11.00" height="3.50" fill="#ff0520"/>
<rect x="410" y="777.50" width="5.83" height="3.33" fill="#ff0520"/>
<rect x="410" y="781.42" width="8.75" height="3.58" fill="#ff0520"/>
<rect x="410" y="785.42" width="10.83" height="3.75" fill="#ff0520"/>
<rect x="410" y="789.58" width="19.83" height="3.75" fill="#ff0520"/>
<rect x="410" y="793.92" width="33.75" height="3.75" fill="#ff0520"/>
<rect x="410" y="798.08" width="14.00" height="3.58" fill="#ff0520"/>
<rect x="410" y="802.08" width="27.08" height="3.75" fill="#ff0520"/>
<rect x="410" y="806.08" width="37.83" height="3.75" fill="#ff0520"/>
<rect x="410" y="810.25" width="29.00" height="3.75" fill="#ff0520"/>
<rect x="410" y="814.58" width="7.33" height="3.33" fill="#ff0520"/>
<rect x="410" y="818.33" width="17.92" height="3.75" fill="#ff0520"/>
<rect x="410" y="822.50" width="40.83" height="4.17" fill="#ff0520"/>
<rect x="410" y="827.08" width="18.92" height="3.58" fill="#ff0520"/>
<rect x="410" y="830.83" width="36.67" height="3.75" fill="#73006f"/>
<rect x="410" y="835.00" width="18.92" height="3.75" fill="#73006f"/>
<rect x="410" y="839.00" width="42.92" height="3.92" fill="#73006f"/>
<rect x="410" y="843.17" width="111.00" height="3.67" fill="#73006f"/>
<rect x="410" y="847.33" width="23.17" height="3.67" fill="#73006f"/>
<rect x="410" y="851.42" width="10.83" height="3.33" fill="#73006f"/>
<rect x="410" y="855.17" width="14.83" height="3.83" fill="#73006f"/>
<rect x="410" y="859.33" width="90.00" height="3.83" fill="#73006f"/>
<rect x="410" y="863.75" width="33.92" height="3.75" fill="#73006f"/>
<rect x="410" y="867.92" width="7.83" height="3.33" fill="#73006f"/>
<rect x="410" y="871.83" width="43.83" height="3.83" fill="#73006f"/>
<rect x="410" y="876.00" width="36.00" height="3.83" fill="#73006f"/>
<rect x="410" y="880.17" width="19.75" height="3.83" fill="#73006f"/>
<rect x="410" y="884.17" width="31.92" height="3.75" fill="#1c2952"/>
<rect x="410" y="888.33" width="14.42" height="3.58" fill="#1c2952"/>
<rect x="410" y="892.33" width="16.83" height="3.67" fill="#1c2952"/>
<rect x="410" y="896.50" width="5.67" height="3.50" fill="#1c2952"/>
<rect x="410" y="900.42" width="33.75" height="4.17" fill="#1c2952"/>
<rect x="410" y="905.00" width="12.67" height="3.75" fill="#1c2952"/>
<rect x="410" y="909.17" width="4.83" height="3.33" fill="#1c2952"/>
<rect x="410" y="913.08" width="7.75" height="3.58" fill="#1c2952"/>
<rect x="410" y="917.08" width="6.08" height="3.75" fill="#1c2952"/>
<rect x="410" y="921.08" width="20.83" height="3.92" fill="#1c2952"/>
<rect x="410" y="925.25" width="49.00" height="3.75" fill="#1c2952"/>
<rect x="410" y="929.42" width="14.75" height="3.67" fill="#1c2952"/>
<rect x="410" y="933.50" width="43.83" height="3.75" fill="#1c2952"/>
<rect x="410" y="937.67" width="7.75" height="3.58" fill="#1c2952"/>
<rect x="410" y="941.67" width="38.75" height="3.92" fill="#1c2952"/>
<rect x="410" y="946.00" width="6.92" height="3.75" fill="#1c2952"/>
<rect x="410" y="949.83" width="21.92" height="3.92" fill="#07771a"/>
<rect x="410" y="954.17" width="6.67" height="2.50" fill="#07771a"/>
<rect x="410" y="956.67" width="33.92" height="1.67" fill="#07771a"/>
<rect x="410" y="957.92" width="45.83" height="1.42" fill="#07771a"/>
<rect x="410" y="959.17" width="98.33" height="1.67" fill="#07771a"/>
<rect x="410" y="960.42" width="93.08" height="1.67" fill="#07771a"/>
<rect x="410" y="962.08" width="63.75" height="1.25" fill="#07771a"/>
<rect x="410" y="963.17" width="67.92" height="1.67" fill="#07771a"/>
<rect x="410" y="964.58" width="51.83" height="1.67" fill="#07771a"/>
<rect x="410" y="966.00" width="49.75" height="1.92" fill="#07771a"/>
<rect x="410" y="967.92" width="37.92" height="1.67" fill="#07771a"/>
<rect x="410" y="969.17" width="35.83" height="1.67" fill="#07771a"/>
<rect x="410" y="970.67" width="30.42" height="1.42" fill="#07771a"/>
<rect x="410" y="971.67" width="36.25" height="1.25" fill="#07771a"/>
<rect x="410" y="972.92" width="16.67" height="1.25" fill="#07771a"/>
<rect x="410" y="974.17" width="37.92" height="1.67" fill="#07771a"/>
<rect x="410" y="975.67" width="35.42" height="1.42" fill="#07771a"/>
<rect x="410" y="977.08" width="24.58" height="1.67" fill="#07771a"/>
<rect x="410" y="978.75" width="10.00" height="1.25" fill="#07771a"/>
<rect x="410" y="979.83" width="12.08" height="1.25" fill="#07771a"/>
<rect x="410" y="981.08" width="32.92" height="1.67" fill="#07771a"/>
<rect x="410" y="982.75" width="24.17" height="1.42" fill="#07771a"/>
<rect x="410" y="984.00" width="79.58" height="1.25" fill="#07771a"/>
<rect x="410" y="985.00" width="121.92" height="5.83" fill="#07771a"/>
<rect x="410" y="991.25" width="22.92" height="3.58" fill="#07771a"/>
<rect x="410" y="995.25" width="12.50" height="3.50" fill="#07771a"/>
<rect x="410" y="999.17" width="5.00" height="3.67" fill="#07771a"/>
<rect x="410" y="1002.98" width="14.27" height="3.79" fill="#ff0520"/>
<rect x="410" y="1007.45" width="37.29" height="4.06" fill="#ff0520"/>
<rect x="410" y="1011.92" width="14.67" height="3.66" fill="#ff0520"/>
<rect x="410" y="1016.25" width="0.45" height="2.98" fill="#ff0520"/>
<rect x="410" y="1019.91" width="9.53" height="3.79" fill="#ff0520"/>
<rect x="410" y="1024.10" width="3.16" height="3.66" fill="#ff0520"/>
<rect x="410" y="1028.17" width="7.77" height="3.66" fill="#ff0520"/>
<rect x="410" y="1032.09" width="10.88" height="3.93" fill="#ff0520"/>
<line x1="409.5" y1="618.500" x2="409.5" y2="1037" stroke="#1f2a4a" stroke-width="1.200"/>
<line x1="409" y1="1036.500" x2="549" y2="1036.500" stroke="#1f2a4a" stroke-width="1.200"/>
<text x="407" y="622.9" text-anchor="end" font-size="12" fill="#1c2338">0</text>
<text x="407" y="666.9" text-anchor="end" font-size="12" fill="#1c2338">1000</text>
<text x="407" y="710.9" text-anchor="end" font-size="12" fill="#1c2338">2000</text>
<text x="407" y="754.9" text-anchor="end" font-size="12" fill="#1c2338">3000</text>
<text x="407" y="798.9" text-anchor="end" font-size="12" fill="#1c2338">4000</text>
<text x="407" y="842.9" text-anchor="end" font-size="12" fill="#1c2338">5000</text>
<text x="407" y="886.9" text-anchor="end" font-size="12" fill="#1c2338">6000</text>
<text x="407" y="930.9" text-anchor="end" font-size="12" fill="#1c2338">7000</text>
<text x="407" y="974.9" text-anchor="end" font-size="12" fill="#1c2338">8000</text>
<text x="407" y="1018.9" text-anchor="end" font-size="12" fill="#1c2338">9000</text>
<text x="410.3" y="1051" text-anchor="middle" font-size="12" fill="#1c2338">0</text>
<text x="440.7" y="1051" text-anchor="middle" font-size="12" fill="#1c2338">1</text>
<text x="471.1" y="1051" text-anchor="middle" font-size="12" fill="#1c2338">2</text>
<text x="501.5" y="1051" text-anchor="middle" font-size="12" fill="#1c2338">3</text>
<text x="531.9" y="1051" text-anchor="middle" font-size="12" fill="#1c2338">4</text>
<text transform="translate(371,826) rotate(-90)" text-anchor="middle" font-size="14" fill="#1c2338">MD (ft)</text>
<text x="389.300" y="1087.200" text-anchor="start" font-size="14.200" fill="#1c2338">Dogleg Severity (°/100ft)</text>
</svg>

<div id="tbl">
<div class="abs" style="left:0;top:0;width:1400px;height:56px;background:#f4f4f5"></div>
<svg class="abs ic" style="left:18px;top:20px;width:16px;height:16px;color:#737373" viewBox="0 0 24 24"><use href="#i-panel"/></svg>
<div class="th" style="left:58px"><span>Row Type</span><svg class="abs ic info" style="left:67.0px" viewBox="0 0 24 24"><use href="#i-info"/></svg></div>
<div class="th" style="left:190px"><span>Rod Type</span><svg class="abs ic info" style="left:65.0px" viewBox="0 0 24 24"><use href="#i-info"/></svg></div>
<div class="th" style="left:330px"><span>Supplier</span><svg class="abs ic info" style="left:56.5px" viewBox="0 0 24 24"><use href="#i-info"/></svg></div>
<div class="th" style="left:486px"><span>Grade</span><svg class="abs ic info" style="left:42.0px" viewBox="0 0 24 24"><use href="#i-info"/></svg></div>
<div class="th" style="left:594px"><span>Diameter (in)</span><svg class="abs ic info" style="left:87.5px" viewBox="0 0 24 24"><use href="#i-info"/></svg></div>
<div class="th" style="left:718px"><span>Stress Calc</span><svg class="abs ic info" style="left:77.5px" viewBox="0 0 24 24"><use href="#i-info"/></svg></div>
<div class="th" style="left:862.5px"><span>Guided</span><svg class="abs ic info" style="left:49.5px" viewBox="0 0 24 24"><use href="#i-info"/></svg></div>
<div class="th" style="left:940.5px"><span>Guide Type</span><svg class="abs ic info" style="left:78.0px" viewBox="0 0 24 24"><use href="#i-info"/></svg></div>
<div class="th" style="left:1080px"><span style="top:8px;line-height:20px;white-space:normal;width:50px">Guides Per</span><svg class="abs ic info" style="left:53.500px;top:22px;width:12px;height:12px" viewBox="0 0 24 24"><use href="#i-info"/></svg></div>
<div class="th" style="left:1157px"><span style="top:8px;line-height:20px;white-space:normal;width:52px">Friction Coef.</span><svg class="abs ic info" style="left:57px;top:22px;width:12px;height:12px;color:#999" viewBox="0 0 24 24"><use href="#i-info"/></svg></div>
<div class="th" style="left:1237px"><span>Length (ft)</span></div>
<div class="row" style="top:56px">
<svg class="ic grip" viewBox="0 0 24 24"><use href="#i-grip"/></svg>
<div class="sel" style="left:58px;width:120px"><span style="">Branded</span><svg class="ic" viewBox="0 0 24 24"><use href="#i-cd"/></svg></div>
<div class="sel" style="left:190px;width:128px"><span style="">Sucker Rod</span><svg class="ic" viewBox="0 0 24 24"><use href="#i-cd"/></svg></div>
<div class="sel" style="left:330px;width:144px"><span style="">Tenaris</span><svg class="ic" viewBox="0 0 24 24"><use href="#i-cd"/></svg></div>
<div class="sel" style="left:486px;width:96px"><span style="width:51px;">AlphaRod CS</span><svg class="ic" viewBox="0 0 24 24"><use href="#i-cd"/></svg></div>
<div class="sel" style="left:594px;width:112px"><span style="">1</span><svg class="ic" viewBox="0 0 24 24"><use href="#i-cd"/></svg></div>
<div class="sel" style="left:718px;width:133px"><span style="">AlphaRod CS</span><svg class="ic" viewBox="0 0 24 24"><use href="#i-cd"/></svg></div>
<div class="tcb"></div>
<div class="sel ud" style="left:940px;width:128px"><span style="color:#737373;">Select</span><svg class="ic" viewBox="0 0 24 24"><use href="#i-ud"/></svg></div>
<div class="inp" style="left:1080px;width:65px"><span>0</span></div>
<div class="inp" style="left:1157px;width:68px"><span>0.25</span></div>
<div class="inp" style="left:1237px;width:80px"><span>1700.00</span></div>
</div>
<div class="row" style="top:105px">
<svg class="ic grip" viewBox="0 0 24 24"><use href="#i-grip"/></svg>
<div class="sel" style="left:58px;width:120px"><span style="">Branded</span><svg class="ic" viewBox="0 0 24 24"><use href="#i-cd"/></svg></div>
<div class="sel" style="left:190px;width:128px"><span style="">Fiberglass</span><svg class="ic" viewBox="0 0 24 24"><use href="#i-cd"/></svg></div>
<div class="sel" style="left:330px;width:144px"><span style="">ELS</span><svg class="ic" viewBox="0 0 24 24"><use href="#i-cd"/></svg></div>
<div class="sel" style="left:486px;width:96px"><span style="width:51px;">Series 300</span><svg class="ic" viewBox="0 0 24 24"><use href="#i-cd"/></svg></div>
<div class="sel" style="left:594px;width:112px"><span style="">1 1/4</span><svg class="ic" viewBox="0 0 24 24"><use href="#i-cd"/></svg></div>
<div class="sel" style="left:718px;width:133px"><span style="">ELS 300</span><svg class="ic" viewBox="0 0 24 24"><use href="#i-cd"/></svg></div>
<div class="tcb on"><svg class="ic" viewBox="0 0 24 24"><use href="#i-check"/></svg></div>
<div class="sel ud" style="left:940px;width:128px"><span style="">Molded AU</span><svg class="ic" viewBox="0 0 24 24"><use href="#i-ud"/></svg></div>
<div class="inp" style="left:1080px;width:65px"><span>6</span></div>
<div class="inp" style="left:1157px;width:68px"><span>0.25</span></div>
<div class="inp" style="left:1237px;width:80px"><span>1350.00</span></div>
</div>
<div class="row" style="top:154px">
<svg class="ic grip" viewBox="0 0 24 24"><use href="#i-grip"/></svg>
<div class="sel" style="left:58px;width:120px"><span style="">Branded</span><svg class="ic" viewBox="0 0 24 24"><use href="#i-cd"/></svg></div>
<div class="sel" style="left:190px;width:128px"><span style="">Fiberglass</span><svg class="ic" viewBox="0 0 24 24"><use href="#i-cd"/></svg></div>
<div class="sel" style="left:330px;width:144px"><span style="">ELS</span><svg class="ic" viewBox="0 0 24 24"><use href="#i-cd"/></svg></div>
<div class="sel" style="left:486px;width:96px"><span style="width:51px;">Series 300</span><svg class="ic" viewBox="0 0 24 24"><use href="#i-cd"/></svg></div>
<div class="sel" style="left:594px;width:112px"><span style="">1 1/4</span><svg class="ic" viewBox="0 0 24 24"><use href="#i-cd"/></svg></div>
<div class="sel" style="left:718px;width:133px"><span style="">ELS 300</span><svg class="ic" viewBox="0 0 24 24"><use href="#i-cd"/></svg></div>
<div class="tcb"></div>
<div class="sel ud" style="left:940px;width:128px"><span style="color:#737373;">Select</span><svg class="ic" viewBox="0 0 24 24"><use href="#i-ud"/></svg></div>
<div class="inp" style="left:1080px;width:65px"><span>0</span></div>
<div class="inp" style="left:1157px;width:68px"><span>0.25</span></div>
<div class="inp" style="left:1237px;width:80px"><span>1700.00</span></div>
</div>
<div class="row" style="top:203px">
<svg class="ic grip" viewBox="0 0 24 24"><use href="#i-grip"/></svg>
<div class="sel" style="left:58px;width:120px"><span style="">Branded</span><svg class="ic" viewBox="0 0 24 24"><use href="#i-cd"/></svg></div>
<div class="sel" style="left:190px;width:128px"><span style="">Fiberglass</span><svg class="ic" viewBox="0 0 24 24"><use href="#i-cd"/></svg></div>
<div class="sel" style="left:330px;width:144px"><span style="">ELS</span><svg class="ic" viewBox="0 0 24 24"><use href="#i-cd"/></svg></div>
<div class="sel" style="left:486px;width:96px"><span style="width:51px;">Series 300</span><svg class="ic" viewBox="0 0 24 24"><use href="#i-cd"/></svg></div>
<div class="sel" style="left:594px;width:112px"><span style="">1 1/4</span><svg class="ic" viewBox="0 0 24 24"><use href="#i-cd"/></svg></div>
<div class="sel" style="left:718px;width:133px"><span style="">ELS 300</span><svg class="ic" viewBox="0 0 24 24"><use href="#i-cd"/></svg></div>
<div class="tcb on"><svg class="ic" viewBox="0 0 24 24"><use href="#i-check"/></svg></div>
<div class="sel ud" style="left:940px;width:128px"><span style="">Molded AU</span><svg class="ic" viewBox="0 0 24 24"><use href="#i-ud"/></svg></div>
<div class="inp" style="left:1080px;width:65px"><span>6</span></div>
<div class="inp" style="left:1157px;width:68px"><span>0.25</span></div>
<div class="inp" style="left:1237px;width:80px"><span>1250.00</span></div>
</div>
<div class="row" style="top:252px">
<svg class="ic grip" viewBox="0 0 24 24"><use href="#i-grip"/></svg>
<div class="sel" style="left:58px;width:120px"><span style="">Branded</span><svg class="ic" viewBox="0 0 24 24"><use href="#i-cd"/></svg></div>
<div class="sel" style="left:190px;width:128px"><span style="">Fiberglass</span><svg class="ic" viewBox="0 0 24 24"><use href="#i-cd"/></svg></div>
<div class="sel" style="left:330px;width:144px"><span style="">ELS</span><svg class="ic" viewBox="0 0 24 24"><use href="#i-cd"/></svg></div>
<div class="sel" style="left:486px;width:96px"><span style="width:51px;">Series 300</span><svg class="ic" viewBox="0 0 24 24"><use href="#i-cd"/></svg></div>
<div class="sel" style="left:594px;width:112px"><span style="">1 1/4</span><svg class="ic" viewBox="0 0 24 24"><use href="#i-cd"/></svg></div>
<div class="sel" style="left:718px;width:133px"><span style="">ELS 300</span><svg class="ic" viewBox="0 0 24 24"><use href="#i-cd"/></svg></div>
<div class="tcb"></div>
<div class="sel ud" style="left:940px;width:128px"><span style="color:#737373;">Select</span><svg class="ic" viewBox="0 0 24 24"><use href="#i-ud"/></svg></div>
<div class="inp" style="left:1080px;width:65px"><span>0</span></div>
<div class="inp" style="left:1157px;width:68px"><span>0.25</span></div>
<div class="inp" style="left:1237px;width:80px"><span>1500.00</span></div>
</div>
<div class="row" style="top:301px">
<svg class="ic grip" viewBox="0 0 24 24"><use href="#i-grip"/></svg>
<div class="sel" style="left:58px;width:120px"><span style="">Branded</span><svg class="ic" viewBox="0 0 24 24"><use href="#i-cd"/></svg></div>
<div class="sel" style="left:190px;width:128px"><span style="">Sucker Rod</span><svg class="ic" viewBox="0 0 24 24"><use href="#i-cd"/></svg></div>
<div class="sel" style="left:330px;width:144px"><span style="">Tenaris</span><svg class="ic" viewBox="0 0 24 24"><use href="#i-cd"/></svg></div>
<div class="sel" style="left:486px;width:96px"><span style="width:51px;">AlphaRod CS</span><svg class="ic" viewBox="0 0 24 24"><use href="#i-cd"/></svg></div>
<div class="sel" style="left:594px;width:112px"><span style="">1</span><svg class="ic" viewBox="0 0 24 24"><use href="#i-cd"/></svg></div>
<div class="sel" style="left:718px;width:133px"><span style="">AlphaRod CS</span><svg class="ic" viewBox="0 0 24 24"><use href="#i-cd"/></svg></div>
<div class="tcb on"><svg class="ic" viewBox="0 0 24 24"><use href="#i-check"/></svg></div>
<div class="sel ud" style="left:940px;width:128px"><span style="">Molded AU</span><svg class="ic" viewBox="0 0 24 24"><use href="#i-ud"/></svg></div>
<div class="inp" style="left:1080px;width:65px"><span>4</span></div>
<div class="inp" style="left:1157px;width:68px"><span>0.25</span></div>
<div class="inp" style="left:1237px;width:80px"><span>1200.00</span></div>
</div>
<div class="row" style="top:350px">
<svg class="ic grip" viewBox="0 0 24 24"><use href="#i-grip"/></svg>
<div class="sel" style="left:58px;width:120px"><span style="">Branded</span><svg class="ic" viewBox="0 0 24 24"><use href="#i-cd"/></svg></div>
<div class="sel" style="left:190px;width:128px"><span style="">Sinker Bar</span><svg class="ic" viewBox="0 0 24 24"><use href="#i-cd"/></svg></div>
<div class="sel" style="left:330px;width:144px"><span style="">API</span><svg class="ic" viewBox="0 0 24 24"><use href="#i-cd"/></svg></div>
<div class="sel" style="left:486px;width:96px"><span style="width:51px;">D (Sinker Bar)</span><svg class="ic" viewBox="0 0 24 24"><use href="#i-cd"/></svg></div>
<div class="sel" style="left:594px;width:112px"><span style="">1 5/8</span><svg class="ic" viewBox="0 0 24 24"><use href="#i-cd"/></svg></div>
<div class="sel" style="left:718px;width:133px"><span style="">T/4</span><svg class="ic" viewBox="0 0 24 24"><use href="#i-cd"/></svg></div>
<div class="tcb"></div>
<div class="sel ud" style="left:940px;width:128px"><span style="color:#737373;">Select</span><svg class="ic" viewBox="0 0 24 24"><use href="#i-ud"/></svg></div>
<div class="inp" style="left:1080px;width:65px"><span>0</span></div>
<div class="inp" style="left:1157px;width:68px"><span>0.25</span></div>
<div class="inp" style="left:1237px;width:80px"><span>800.00</span></div>
</div>
<div class="abs" style="left:0;top:399px;width:1266px;height:14px;background:#fafafa"></div>
<div class="abs" style="left:3px;top:402px;width:1177px;height:8px;border-radius:4px;background:#c1c1c1"></div>
</div>
<div class="abs nw m" style="left:1310px;top:989px">PSN Depth (ftKB)</div>
<svg class="abs ic" style="left:1433px;top:991px;width:16px;height:16px;color:#555" viewBox="0 0 24 24"><use href="#i-info"/></svg>
<div class="abs" style="left:1478px;top:981px;width:120px;height:36px;border:1px solid #ededed;border-radius:4px;background:#fff"><div class="abs nw" style="right:12.500px;top:8px;color:#9a9a9a">9500.00</div></div>
<div class="abs nw m" style="left:1310px;top:1033px">Total Length (ft)</div>
<svg class="abs ic" style="left:1424.5px;top:1035px;width:16px;height:16px;color:#555" viewBox="0 0 24 24"><use href="#i-info"/></svg>
<div class="abs" style="left:1478px;top:1025px;width:120px;height:36px;border:1px solid #ededed;border-radius:4px;background:#fff"><div class="abs nw" style="right:12.500px;top:8px;color:#9a9a9a">9500.00</div></div>
<div class="abs nw m" style="left:1310px;top:1077px">Remaining (ft)</div>
<svg class="abs ic" style="left:1416px;top:1079px;width:16px;height:16px;color:#555" viewBox="0 0 24 24"><use href="#i-info"/></svg>
<div class="abs" style="left:1478px;top:1069px;width:120px;height:36px;border:1px solid #ededed;border-radius:4px;background:#fff"><div class="abs nw" style="right:12.500px;top:8px;color:#9a9a9a">0.00</div></div>
</div>
<div id="pop">
  <div class="lbl12 sb" style="left:12px;top:12px">Current Organization</div>
  <svg class="abs ic" style="left:450px;top:12px;width:16px;height:16px;color:#171717" viewBox="0 0 24 24"><use href="#i-search"/></svg>
  <div class="abs" style="left:8px;top:40px;width:462px;height:48px;border-radius:6px;background:#fafafa">
    <svg class="abs" style="left:8px;top:10px;width:28px;height:28px" viewBox="0 0 28 28"><rect width="28" height="28" rx="3.500" fill="#fafafa"/><use href="#orglogo-t"/></svg>
    <div class="abs sb nw" style="left:44px;top:6px">International Operations</div>
    <svg class="abs ic" style="left:44px;top:27px;width:12px;height:12px;color:#9b9b9b;fill:rgba(150,150,150,.55)" viewBox="0 0 24 24"><use href="#i-building"/></svg>
    <div class="abs nw" style="left:60px;top:26px;font-size:12px;line-height:16px;color:#737373">Division</div>
    <div class="abs" style="left:402px;top:12px;width:24px;height:24px;border:1px solid #e5e5e5;border-radius:4px;background:#fff;box-shadow:0 1px 2px rgba(0,0,0,.05)"><svg class="abs ic" style="left:3px;top:3px;width:16px;height:16px;color:#525252" viewBox="0 0 24 24"><use href="#i-house"/></svg></div>
    <div class="abs" style="left:430px;top:12px;width:24px;height:24px;border:1px solid #e5e5e5;border-radius:4px;background:#fff;box-shadow:0 1px 2px rgba(0,0,0,.05)"><svg class="abs ic" style="left:3px;top:3px;width:16px;height:16px;color:#525252" viewBox="0 0 24 24"><use href="#i-sliders"/></svg></div>
  </div>
  <div class="hline" style="top:104px;width:478px"></div>

  <!-- scrollbar -->
  <div class="abs" style="left:463px;top:105px;width:15px;height:332px;border-left:1px solid #ebebeb;background:#fff"></div>
  <div class="abs" style="left:467px;top:108px;width:8px;height:316px;border-radius:4px;background:#c1c1c1"></div>

  <div class="lbl12 sb" style="left:12px;top:113px">Enterprise Organizations</div>
  <div class="lbl12" style="left:16px;top:139px">PetroBench Energy Corp</div>
  <svg class="abs ic" style="left:429px;top:139px;width:16px;height:16px;color:#525252" viewBox="0 0 24 24"><use href="#i-cd"/></svg>

  <div class="orgrow" style="top:161px"><svg class="lg" viewBox="0 0 28 28"><use href="#orglogo-t"/></svg><span class="nm">Exploration Division</span></div>
  <div class="orgrow" style="top:194px;background:#fafafa"><svg class="ic chev" viewBox="0 0 24 24"><use href="#i-cd"/></svg><svg class="lg" viewBox="0 0 28 28"><use href="#orglogo-t"/></svg><span class="nm">International Operations</span><svg class="abs ic" style="left:424.700px;top:9px;width:14px;height:14px;color:#12a14a;stroke-width:2.600" viewBox="0 0 24 24"><use href="#i-check"/></svg></div>
  <div class="reg" style="top:226px"><svg class="ic" viewBox="0 0 24 24"><use href="#i-pin"/></svg><span>Middle East Region</span></div>
  <div class="reg" style="top:254px"><svg class="ic" viewBox="0 0 24 24"><use href="#i-pin"/></svg><span>European Region</span></div>
  <div class="orgrow" style="top:283px"><svg class="ic chev" viewBox="0 0 24 24"><use href="#i-cd"/></svg><svg class="lg" viewBox="0 0 28 28"><use href="#orglogo-t"/></svg><span class="nm">North American Operations</span></div>
  <div class="reg" style="top:315px"><svg class="ic" viewBox="0 0 24 24"><use href="#i-pin"/></svg><span>Texas Region</span></div>
  <div class="reg" style="top:343px"><svg class="ic" viewBox="0 0 24 24"><use href="#i-pin"/></svg><span>Alaska Region</span></div>

  <div class="hline" style="left:4px;top:379px;width:455px"></div>
  <div class="lbl12 sb" style="left:12px;top:386px">Personal Organizations</div>
  <svg class="abs" style="left:15.800px;top:411.800px;width:20.300px;height:20.300px" viewBox="0 0 20 20"><defs><clipPath id="pc"><circle cx="10" cy="10" r="10"/></clipPath></defs><circle cx="10" cy="10" r="10" fill="#1a6cf4"/><g clip-path="url(#pc)" fill="#fff"><circle cx="10.100" cy="9.850" r="5.100"/><circle cx="0" cy="0" r="5.400"/><path d="M1.300 9.600A9.750 9.750 0 0 0 9.700 1.400A7.300 7.300 0 0 1 1.300 9.600z"/></g></svg>
  <div class="abs nw" style="left:42px;top:411px;font-size:13px;line-height:20px">John Henderson's Professional</div>
  <div class="abs m nw" style="left:391px;top:412px;width:56px;height:20px;border-radius:4px;background:#f4f4f5;font-size:10px;line-height:20px;text-align:center">Personal</div>

  <div class="hline" style="top:437px;width:478px"></div>
  <div class="fbtn" style="left:12px;width:75px"><svg class="ic" viewBox="0 0 24 24"><use href="#i-book"/></svg><span>Docs</span></div>
  <div class="fbtn" style="left:91px;width:92px"><svg class="ic" viewBox="0 0 24 24"><use href="#i-msgc"/></svg><span>Support</span></div>
  <div class="fbtn" style="left:187px;width:102px"><svg class="ic" viewBox="0 0 24 24"><use href="#i-msgs"/></svg><span>Feedback</span></div>
  <div class="fbtn" style="left:293px;width:124px"><svg class="ic" viewBox="0 0 24 24"><use href="#i-gear"/></svg><span>User Settings</span></div>
</div>
<div class="abs" style="left:1856px;top:1010px;width:46px;height:46px;border-radius:50%;background:#fff;border:1px solid #e5e5e5;box-shadow:0 0 0 .500px rgba(0,0,0,.06),0 8px 16px -3px rgba(0,0,0,.16),0 3px 6px -3px rgba(0,0,0,.12)"><svg class="abs ic" style="left:12px;top:12px;width:20px;height:20px;color:#0a0a0a" viewBox="0 0 24 24"><use href="#i-help"/></svg></div>
</div>
</body>
</html>
